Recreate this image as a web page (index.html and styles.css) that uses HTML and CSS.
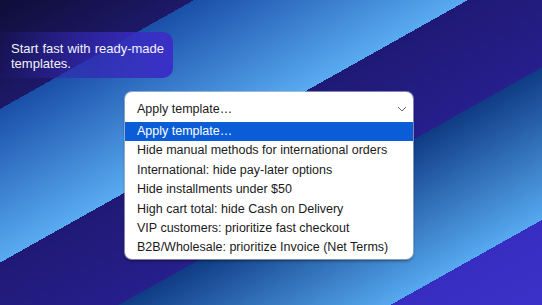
FILE: index.html
```html
<!DOCTYPE html>
<html>
<head>
<meta charset="utf-8">
<link rel="stylesheet" href="styles.css">
</head>
<body>
<main class="stage">
  <div class="tip">Start fast with ready-made templates.</div>
  <div class="select">
    <div class="select-head">
      <span class="head-label">Apply template…</span>
      <svg class="chev" width="10" height="6" viewBox="0 0 10 6"><path d="M1 1l4 4 4-4" fill="none" stroke="#666" stroke-width="1"/></svg>
    </div>
    <ul class="options">
      <li class="opt active">Apply template…</li>
      <li class="opt">Hide manual methods for international orders</li>
      <li class="opt">International: hide pay-later options</li>
      <li class="opt">Hide installments under $50</li>
      <li class="opt">High cart total: hide Cash on Delivery</li>
      <li class="opt">VIP customers: prioritize fast checkout</li>
      <li class="opt">B2B/Wholesale: prioritize Invoice (Net Terms)</li>
    </ul>
  </div>
</main>
</body>
</html>
```

FILE: styles.css
```css
html, body {
  margin: 0;
  padding: 0;
}
body {
  width: 542px;
  height: 305px;
  overflow: hidden;
  font-family: "Liberation Sans", Arial, sans-serif;
}
.stage {
  width: 542px;
  height: 305px;
  display: flex;
  flex-direction: column;
  align-items: flex-start;
  background: linear-gradient(150.7deg,
    #0f0d38 0px, #1d1968 95px,
    #1a4fa8 95px, #59abf1 229px,
    #1f1975 229px, #261f8c 324px,
    #0f3b84 324px, #56a9f0 457px,
    #372dc0 457px, #3b31c8 531px);
}
.tip {
  margin-top: 32px;
  width: 153px;
  padding: 9px 9px 7px 11px;
  border-radius: 0 10px 10px 0;
  background: linear-gradient(90deg, rgba(30, 24, 110, 0.15) 0%, rgba(52, 40, 180, 0.75) 55%, #3a2fc6 100%);
  color: #f2f2f8;
  font-size: 13px;
  line-height: 15px;
  text-align: justify;
}
.select {
  margin-top: 14px;
  margin-left: 125px;
  width: 288px;
  background: #fff;
  border-radius: 7px;
  box-shadow: 0 0 0 1px rgba(200, 205, 215, 0.6), 0 2px 3px rgba(0, 0, 0, 0.45);
  overflow: hidden;
}
.select-head {
  height: 30px;
  display: flex;
  justify-content: space-between;
  padding: 0 6px 0 12px;
  font-size: 12.5px;
  color: #1a1a1a;
}
.head-label {
  line-height: 14px;
  padding-top: 10px;
}
.chev {
  margin-top: 14px;
}
.options {
  list-style: none;
  margin: 0;
  padding: 0 0 1px;
}
.opt {
  height: 19.4px;
  line-height: 19.4px;
  padding-left: 12px;
  font-size: 12.5px;
  color: #1a1a1a;
  white-space: nowrap;
}
.opt.active {
  background: #0b5dd7;
  color: #fff;
}
```
